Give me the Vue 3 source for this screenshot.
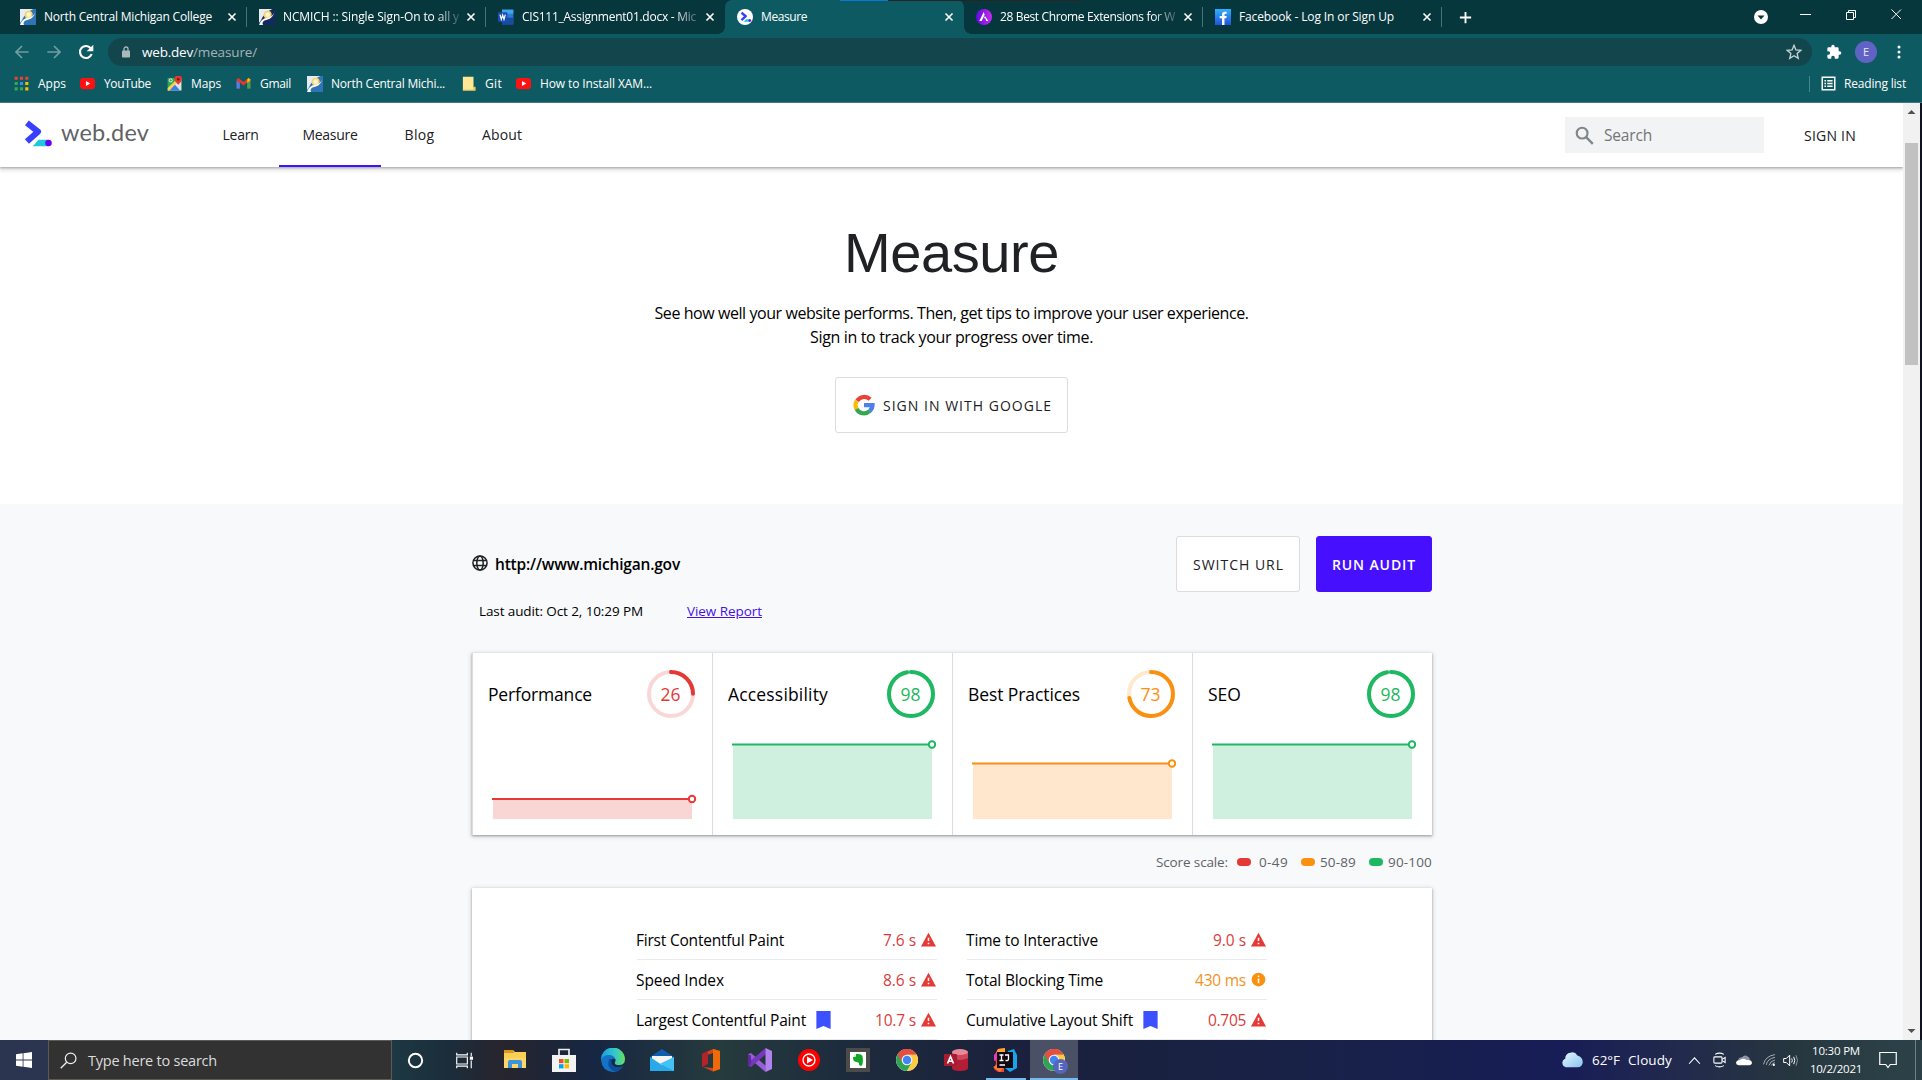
<script setup>
// Tightens or loosens the tracking of a label so that it fills the given width.
const vFit = {
  mounted(el, { value }) {
    const natural = el.getBoundingClientRect().width
    el.style.letterSpacing = (value - natural) / el.textContent.length + 'px'
  },
}

const chrome = `<circle cx="12" cy="12" r="11" fill="#fff"/><path d="M12 12 2.5 6.5A11 11 0 0 1 21.5 6.500H12Z" fill="#e2503f"/><path d="M2.5 6.500A11 11 0 0 0 12 23L16.800 14.700 12 12Z" fill="#2fa455"/><path d="M21.500 6.500A11 11 0 0 1 12 23L16.800 14.700 14 7Z" fill="#fbcb40"/><path d="M2.500 6.500 7.200 14.700 9 8 12 6.500H21.500A11 11 0 0 0 2.500 6.500Z" fill="#e2503f"/><circle cx="12" cy="12" r="5.300" fill="#f4f6fa"/><circle cx="12" cy="12" r="4.200" fill="#3f86f3"/>`
const college = (dark) => `<path d="M0 0H24V24H0Z" fill="${dark}"/><path d="M0 0H20Q8 5 3 17L0 21Z" fill="#e6ecf2"/><circle cx="13" cy="8.500" r="6" fill="#f7d36b"/><circle cx="13" cy="8.500" r="3.500" fill="#fff6cf"/><path d="M0 24Q3 14 12 13T23 4Q21 14 12 16T6 24Z" fill="#fff"/>`
const youtube = `<rect y="3" width="24" height="18" rx="5" fill="#f11"/><path d="M9.500 8 16.500 12 9.500 16Z" fill="#fff"/>`
const webdev = `<path d="M2.500 2.500 12 10 2.500 18.500" fill="none" stroke="#3740ff" stroke-width="5.200" stroke-linejoin="round"/><path d="M7.500 22.500 12.500 17H21V22.500Z" fill="#1fc8db"/><circle cx="21" cy="19.700" r="2.800" fill="#6a00f4"/>`

const icons = {
  nc: college('#2f74b5'),
  ncDark: college('#14295c'),
  word: `<path d="M6 1H23V23H6Z" fill="#2b7cd3"/><path d="M6 1H23V7H6Z" fill="#41a5ee"/><path d="M6 13H23V23H6Z" fill="#1b4aa5"/><rect y="5" width="14" height="14" rx="1" fill="#184fb4"/><path d="M3 8.500 5 15.500 7 9 9 15.500 11 8.500" fill="none" stroke="#fff" stroke-width="1.800"/>`,
  webdevFav: `<circle cx="12" cy="12" r="12" fill="#fff"/><g transform="translate(5 4) scale(.68)">${webdev}</g>`,
  astra: `<defs><linearGradient id="as"><stop stop-color="#5a0be0"/><stop offset="1" stop-color="#c62cf0"/></linearGradient></defs><circle cx="12" cy="12" r="12" fill="url(#as)"/><path d="M11.500 4.500 5 18H8.500L13 8.500ZM13.500 10.500 11.800 14H14L15.500 18H18.500Z" fill="#fff"/>`,
  facebook: `<defs><linearGradient id="fb" x2="0" y2="1"><stop stop-color="#2cb2fa"/><stop offset="1" stop-color="#2450d8"/></linearGradient></defs><path d="M0 0H24V24H0Z" fill="url(#fb)"/><path d="M10.500 24V14H7V10.500H10.500V8Q10.500 4 14.800 4H17.500V7.300H16Q14.200 7.300 14.200 9V10.500H17.500L17 14H14.200V24Z" fill="#fff"/>`,
  close: `<path d="M6 6 18 18M18 6 6 18" stroke="#fff" stroke-width="2.800"/>`,
  plus: `<path d="M12 3V21M3 12H21" stroke="#fff" stroke-width="3"/>`,
  back: `<path d="M22 12H4M12 3 3 12 12 21" fill="none" stroke="#6f9da1" stroke-width="2.600"/>`,
  forward: `<path d="M2 12H20M12 3 21 12 12 21" fill="none" stroke="#6f9da1" stroke-width="2.600"/>`,
  reload: `<path d="M20.500 15A9 9 0 1 1 19.500 7" fill="none" stroke="#fff" stroke-width="3.200"/><path d="M23 1V11H13Z" fill="#fff"/>`,
  lock: `<rect x="4" y="9" width="16" height="14" rx="1.500" fill="#a9b9bc"/><path d="M8 10V6A4 4 0 0 1 16 6V10" fill="none" stroke="#a9b9bc" stroke-width="2.600"/>`,
  star: `<path d="M12 2 14.900 8.900 22.300 9.500 16.700 14.300 18.400 21.600 12 17.700 5.600 21.600 7.300 14.300 1.700 9.500 9.100 8.900Z" fill="none" stroke="#c8d3d4" stroke-width="2"/>`,
  puzzle: `<path d="M20.500 11H19V7a2 2 0 0 0-2-2H13V3.500a2.500 2.500 0 0 0-5 0V5H4A2 2 0 0 0 2 7V10.800H3.500a2.700 2.700 0 0 1 0 5.400H2V20a2 2 0 0 0 2 2H7.800V20.500a2.700 2.700 0 0 1 5.400 0V22H17a2 2 0 0 0 2-2V16H20.500a2.500 2.500 0 0 0 0-5Z" fill="#fff"/>`,
  dots: `<g fill="#fff"><circle cx="12" cy="3.500" r="2.600"/><circle cx="12" cy="12" r="2.600"/><circle cx="12" cy="20.500" r="2.600"/></g>`,
  apps: `<path d="M1 1H6V6H1ZM9.500 1H14.500V6H9.500ZM18 1H23V6H18Z" fill="#ea4335"/><path d="M1 9.500H6V14.500H1ZM1 18H6V23H1Z" fill="#34a853"/><path d="M9.500 9.500H14.500V14.500H9.500Z" fill="#4285f4"/><path d="M18 9.500H23V14.500H18ZM18 18H23V23H18Z" fill="#fbbc04"/><path d="M9.500 18H14.500V23H9.500Z" fill="#34a853"/>`,
  youtube,
  maps: `<path d="M1 3H23V23H1Z" fill="#2fa65a"/><path d="M1 23 23 3V23Z" fill="#dfe3e6"/><path d="M3 23 12 13 21 23Z" fill="#3f7de8"/><path d="M1 19 18 3H23L4 23H1Z" fill="#f7d24a"/><path d="M18 14Q12 8 12 5A5.800 5.800 0 0 1 24 5Q24 8 18 14Z" fill="#e5392e"/><circle cx="18" cy="5" r="2" fill="#7c1710"/><circle cx="6" cy="7" r="2.500" fill="none" stroke="#fff" stroke-width="1.300"/>`,
  gmail: `<path d="M1 5V20H6V10L12 15 18 10V20H23V5L20 3 12 9.500 4 3Z" fill="#e8372c"/><path d="M1 7V20H6V11Z" fill="#4285f4"/><path d="M18 11V20H23V7Z" fill="#34a853"/><path d="M18 11 23 7V5L20 3 18 5Z" fill="#fbbc04"/>`,
  folder: `<path d="M3 1H20V18H23V23H3Z" fill="#ffe795"/><path d="M20 17H23V23H3V21.500H20Z" fill="#e8c65b"/>`,
  reading: `<rect x="2" y="2" width="20" height="20" fill="none" stroke="#fff" stroke-width="2.400"/><path d="M5.500 7.500H8M10 7.500H18.500M5.500 12H8M10 12H18.500M5.500 16.500H8M10 16.500H18.500" stroke="#fff" stroke-width="2.300"/>`,
  webdev,
  search: `<circle cx="9" cy="9" r="6.800" fill="none" stroke="#80868b" stroke-width="2.700"/><path d="M14 14 22.500 22.500" stroke="#80868b" stroke-width="3"/>`,
  google: `<g fill="none" stroke-width="4.600"><path d="M4.500 7.500A9.200 9.200 0 0 1 18.700 5.800" stroke="#ea4335"/><path d="M4 16.500A9.200 9.200 0 0 1 4 7.500" stroke="#fbbc05"/><path d="M18.300 18.600A9.200 9.200 0 0 1 3.900 16.300" stroke="#34a853"/><path d="M12 12.100H21.300Q21.300 16.200 18.200 18.700" stroke="#4c7ff0"/></g>`,
  globe: `<g fill="none" stroke="#202124" stroke-width="2.300"><circle cx="12" cy="12" r="10.600"/><ellipse cx="12" cy="12" rx="4.800" ry="10.600"/><path d="M2 8.300H22M2 15.700H22"/></g>`,
  fail: `<path d="M12 1 24 23H0Z" fill="#e53935"/><path d="M12 9V14.500M12 17V19.500" stroke="#fff" stroke-width="2.400"/>`,
  average: `<circle cx="12" cy="12" r="11" fill="#fa9010"/><path d="M12 5.500V8M12 10.500V18" stroke="#fff" stroke-width="2.400"/>`,
  bookmark: `<path d="M3 0H21V24L12 20 3 24Z" fill="#3d50ff"/>`,
  windows: `<path d="M0 3.400 10 2V11.400H0ZM11.200 1.800 24 0V11.400H11.200ZM0 12.600H10V22L0 20.600ZM11.200 12.600H24V24L11.200 22.200Z" fill="#fff"/>`,
  find: `<circle cx="15" cy="9" r="7.500" fill="none" stroke="#f0f0f0" stroke-width="1.700"/><path d="M9.500 14.500 1 23" stroke="#f0f0f0" stroke-width="1.800"/>`,
  cortana: `<circle cx="12" cy="12" r="9.400" fill="none" stroke="#fff" stroke-width="2.800"/>`,
  taskview: `<g fill="none" stroke="#fff" stroke-width="1.600"><path d="M1 7H16V17H1ZM1 1V4H16V1M1 23V20H16V23M21.500 1V6M21.500 12V23"/></g><path d="M19.500 6.500H24V11H19.500Z" fill="#fff"/>`,
  explorer: `<path d="M1 2H10L12 4H23V20H1Z" fill="#f9cf55"/><path d="M1 2H10L11 5H1Z" fill="#d79a1c"/><path d="M1 10H23V20H1Z" fill="#fbd669"/><path d="M5 20V14Q5 12 7 12H17Q19 12 19 14V20H15V16H9V20Z" fill="#3d93dc"/>`,
  store: `<path d="M7 8V1.500H17V8" fill="none" stroke="#eee" stroke-width="1.700"/><path d="M0 7H24V24H0Z" fill="#f3f3f3"/><path d="M7 11H11.500V15.200H7Z" fill="#f25022"/><path d="M12.500 11H17V15.200H12.500Z" fill="#7fba00"/><path d="M7 16.200H11.500V20.400H7Z" fill="#00a4ef"/><path d="M12.500 16.200H17V20.400H12.500Z" fill="#ffb900"/>`,
  edge: `<defs><linearGradient id="e1"><stop stop-color="#1d9be6"/><stop offset=".6" stop-color="#35c9c9"/><stop offset="1" stop-color="#66e05c"/></linearGradient></defs><path d="M0 12A12 12 0 0 1 24 11Q24 17 18 17 13 17 14 14 16 11 12 9 6 8 0 12Z" fill="url(#e1)"/><path d="M0 12Q2 7 8 7 13 7 14 11 9 10 8.500 15 8.500 19 14 21 18 22 22 18 18 24 12 24 1 23 0 12Z" fill="#1473c8"/><path d="M8 11Q5 21 14 23.700 19 23.500 22 18 17 20.500 12.500 18 9 15 11 11Z" fill="#0c4f9d"/>`,
  mail: `<path d="M0 9 12 1 24 9V12H0Z" fill="#0f5fb0"/><path d="M2 8H22V18H2Z" fill="#f5f5f5"/><path d="M0 9 12 17 24 9V23H0Z" fill="#2aa9ea"/><path d="M24 9V23L10 15.700Z" fill="#43c3f5"/>`,
  office: `<path d="M3 6 14 1 21 3V21L14 23.500 4 19 14 20V5L8 7V16L3 19Z" fill="#d9411a"/><path d="M14 1 21 3V21L14 23.500Z" fill="#f06a08"/><path d="M3 6 9 3V16L3 19Z" fill="#b4232a"/>`,
  vs: `<path d="M0 6.500 3 5 18 18 17.500 24 0 9Z" fill="#9a5cd8"/><path d="M0 17.500 3 19 18 6 17.500 0 0 15Z" fill="#7438b8"/><path d="M0 6.500 3 7.500V16.500L0 17.500Z" fill="#5d2b9c"/><path d="M17.500 0 24 3V21L17.500 24Z" fill="#b182ee"/>`,
  ytmusic: `<circle cx="12" cy="12" r="11" fill="#f00"/><circle cx="12" cy="12" r="6" fill="none" stroke="#fff" stroke-width="1.300"/><path d="M10 8.500 16 12 10 15.500Z" fill="#fff"/>`,
  evernote: `<path d="M0 0H24V24H0Z" fill="#4b4b4b"/><path d="M4 4H20V20H4Z" fill="#fff"/><path d="M7 9.500 10 6Q15.500 5.500 16.500 8 17.500 14 16 17.500 12.500 18.500 13 15L11 14Q7 14 7 9.500Z" fill="#12a528"/><path d="M7 8.500H9.500V6" fill="none" stroke="#fff" stroke-width=".8"/>`,
  chrome,
  access: `<path d="M8 4V20Q8 23 16 23T24 20V4Z" fill="#b31d35"/><path d="M8 4V10Q16 14 24 10V4Z" fill="#ce4659"/><ellipse cx="16" cy="4" rx="8" ry="3" fill="#e8899a"/><rect y="6" width="13" height="12" rx="1" fill="#a81c2f"/><path d="M3.500 15.500 6.500 8.500 9.500 15.500M4.500 13.300H8.500" fill="none" stroke="#fff" stroke-width="1.600"/>`,
  idea: `<path d="M1 8 5 1 12 0 11 24H5L1 21 3 15Z" fill="#f0443c"/><path d="M5 1 12 0V5H3Z" fill="#fba62d"/><path d="M1 7 4 4V11L1 13Z" fill="#e73cba"/><path d="M15 3 21 1 24 7V20L17 24 12 20Z" fill="#17a3ee"/><path d="M0 19 4 17 10 20 7 24Z" fill="#fc7b2b"/><path d="M4 4H20V20H4Z" fill="#100a10"/><path d="M6.500 7H10.500M8.500 7V12.500M6.500 12.500H10.500M12 7H15.500V11Q15.500 13 12.500 12.500" fill="none" stroke="#fff" stroke-width="1.300"/><path d="M6.500 17H12" stroke="#fff" stroke-width="1.500"/>`,
  cloud: `<defs><linearGradient id="cl" x2="1" y2="1"><stop stop-color="#e7f6ff"/><stop offset="1" stop-color="#86c5ee"/></linearGradient></defs><path d="M5 20A5 5 0 0 1 4.500 10.500 6 6 0 0 1 10 4Q15 2 18 7 24 9 24 14.500 23.500 20 18 20Z" fill="url(#cl)"/>`,
  chevron: `<path d="M2 18 12 7 22 18" fill="none" stroke="#fff" stroke-width="2"/>`,
  meet: `<g fill="none" stroke="#fff" stroke-width="1.700"><rect x="3" y="7" width="13" height="10" rx="1.500"/><path d="M16 11 21 8V16L16 13M5 3Q12-1 19 3M5 21Q12 25 19 21"/></g>`,
  onedrive: `<path d="M3 13Q4 8 9 8 13 3 18 7 22 9 20 13Z" fill="#8e95a3"/><path d="M4 20Q0 19 0 16 1 12 6 12 11 8 16 12 24 11 24 17 23 20 20 20Z" fill="#fff"/>`,
  wifi: `<g fill="none" stroke="#b8c0c8" stroke-width="1.600"><path d="M1 20Q4 5 22 2M6 21Q8 10 22 7M11 22Q13 14 22 12M15.500 22Q17 18 22 17"/></g><circle cx="20" cy="21" r="2" fill="#fff"/>`,
  speaker: `<g fill="none" stroke="#fff" stroke-width="1.500"><path d="M1 9H5L10 4V20L5 15H1ZM13 9Q15 12 13 15M16 6.500Q19.500 12 16 17.500"/><path d="M19.500 4Q24 12 19.500 20" stroke="#88929d"/></g>`,
  notice: `<path d="M1 2H23V18H15L12 22 9 18H1Z" fill="none" stroke="#fff" stroke-width="1.600"/>`,
}

const tabs = [
  { icon: 'nc', label: 'North Central Michigan College', w: 168 },
  { icon: 'ncDark', label: 'NCMICH :: Single Sign-On to all y', w: 176, fade: true },
  { icon: 'word', label: 'CIS111_Assignment01.docx - Mic', w: 174, fade: true, flush: true },
  { icon: 'webdevFav', label: 'Measure', w: 46, active: true },
  { icon: 'astra', label: '28 Best Chrome Extensions for W', w: 175, fade: true },
  { icon: 'facebook', label: 'Facebook - Log In or Sign Up', w: 155 },
]

const bookmarks = [
  { icon: 'apps', label: 'Apps', w: 28, slot: 66 },
  { icon: 'youtube', label: 'YouTube', w: 47, slot: 87 },
  { icon: 'maps', label: 'Maps', w: 30, slot: 69 },
  { icon: 'gmail', label: 'Gmail', w: 31, slot: 71 },
  { icon: 'nc', label: 'North Central Michi...', w: 114, slot: 154 },
  { icon: 'folder', label: 'Git', w: 17, slot: 55 },
  { icon: 'youtube', label: 'How to Install XAM...', w: 112, slot: 160 },
]

const nav = [
  { label: 'Learn', w: 36, slot: 77 },
  { label: 'Measure', w: 55, slot: 102, active: true },
  { label: 'Blog', w: 30, slot: 77 },
  { label: 'About', w: 40, slot: 88 },
]

const red = '#e53935'
const orange = '#fa9010'
const green = '#1eb863'
const ring = 2 * Math.PI * 22
const scores = [
  { label: 'Performance', w: 104, score: 26, color: red, y: 146 },
  { label: 'Accessibility', w: 100, score: 98, color: green, y: 91.5 },
  { label: 'Best Practices', w: 112, score: 73, color: orange, y: 110.5 },
  { label: 'SEO', w: 33, score: 98, color: green, y: 91.5 },
]

const legend = [
  { label: '0-49', w: 29, color: red, gap: 8 },
  { label: '50-89', w: 36, color: orange, gap: 5 },
  { label: '90-100', w: 44, color: green, gap: 5 },
]

const metrics = [
  [
    { label: 'First Contentful Paint', w: 148, value: '7.6 s', vw: 33 },
    { label: 'Speed Index', w: 88, value: '8.6 s', vw: 33 },
    { label: 'Largest Contentful Paint', w: 170, value: '10.7 s', vw: 41, vital: true },
  ],
  [
    { label: 'Time to Interactive', w: 132, value: '9.0 s', vw: 33 },
    { label: 'Total Blocking Time', w: 137, value: '430 ms', vw: 51, average: true },
    { label: 'Cumulative Layout Shift', w: 167, value: '0.705', vw: 38, vital: true },
  ],
]

const apps = ['explorer', 'store', 'edge', 'mail', 'office', 'vs', 'ytmusic', 'evernote', 'chrome', 'access', 'idea']
</script>

<template>
  <div class="screen">
    <div class="browser">
      <div class="tabstrip">
        <div class="snap"><i></i><b></b></div>
        <div v-for="t in tabs" :key="t.label" class="tab" :class="{ active: t.active, flush: t.flush }">
          <svg class="fav" viewBox="0 0 24 24" v-html="icons[t.icon]"></svg>
          <div class="tab-title" :class="{ fade: t.fade }"><span v-fit="t.w">{{ t.label }}</span></div>
          <svg class="tab-close" viewBox="0 0 24 24" v-html="icons.close"></svg>
        </div>
        <svg class="plus" viewBox="0 0 24 24" v-html="icons.plus"></svg>
        <div class="winctl">
          <svg width="160" height="34" viewBox="0 0 160 34" fill="none" stroke="#fff">
            <circle cx="21" cy="17" r="7" fill="#fff" stroke="none" />
            <path d="M17.500 15.500H24.500L21 19.500Z" fill="#06373d" stroke="none" />
            <path d="M60 14.500H71M106.500 12.500H113.500V19.500H106.500ZM108.500 12V10.500H115.500V17.500H114M151.500 9.500 161 19M161 9.500 151.500 19" />
          </svg>
        </div>
      </div>

      <div class="toolbar">
        <svg class="tool" viewBox="0 0 24 24" v-html="icons.back"></svg>
        <svg class="tool" viewBox="0 0 24 24" v-html="icons.forward"></svg>
        <svg class="tool" viewBox="0 0 24 24" v-html="icons.reload"></svg>
        <div class="omnibox">
          <svg class="lock" viewBox="0 0 24 24" v-html="icons.lock"></svg>
          <span v-fit="51">web.dev</span><span v-fit="64" class="path">/measure/</span>
          <svg class="star" viewBox="0 0 24 24" v-html="icons.star"></svg>
        </div>
        <svg class="puzzle" viewBox="0 0 24 24" v-html="icons.puzzle"></svg>
        <div class="avatar">E</div>
        <svg class="dots" viewBox="0 0 24 24" v-html="icons.dots"></svg>
      </div>

      <div class="bookmarks">
        <div v-for="b in bookmarks" :key="b.label" class="bookmark" :style="{ width: b.slot + 'px' }">
          <svg :class="{ tall: b.icon === 'nc' }" viewBox="0 0 24 24" v-html="icons[b.icon]"></svg>
          <span v-fit="b.w">{{ b.label }}</span>
        </div>
        <div class="reading">
          <svg viewBox="0 0 24 24" v-html="icons.reading"></svg>
          <span v-fit="62">Reading list</span>
        </div>
      </div>

      <div class="viewport">
        <div class="page">
          <header class="site-header">
            <svg class="logo" viewBox="0 0 24 24" preserveAspectRatio="none" v-html="icons.webdev"></svg>
            <div class="brand"><span v-fit="88">web.dev</span></div>
            <nav>
              <a v-for="n in nav" :key="n.label" :class="{ current: n.active }" :style="{ width: n.slot + 'px' }">
                <span v-fit="n.w">{{ n.label }}</span>
              </a>
            </nav>
            <div class="search">
              <svg viewBox="0 0 24 24" v-html="icons.search"></svg>
              <span v-fit="48">Search</span>
            </div>
            <a class="signin"><span v-fit="52">SIGN IN</span></a>
          </header>

          <section class="hero">
            <h1><span v-fit="215">Measure</span></h1>
            <p><span v-fit="594">See how well your website performs. Then, get tips to improve your user experience.</span></p>
            <p><span v-fit="283">Sign in to track your progress over time.</span></p>
            <button class="google">
              <svg viewBox="0 0 24 24" v-html="icons.google"></svg>
              <span v-fit="169">SIGN IN WITH GOOGLE</span>
            </button>
          </section>

          <section class="report">
            <div class="url-row">
              <svg class="globe" viewBox="0 0 24 24" v-html="icons.globe"></svg>
              <div class="url"><span v-fit="185">http://www.michigan.gov</span></div>
              <button class="switch"><span v-fit="91">SWITCH URL</span></button>
              <button class="run"><span v-fit="84">RUN AUDIT</span></button>
            </div>
            <div class="audit-row">
              <div class="audited"><span v-fit="164">Last audit: Oct 2, 10:29 PM</span></div>
              <a><span v-fit="75">View Report</span></a>
            </div>

            <div class="scores">
              <div v-for="s in scores" :key="s.label" class="score">
                <div class="score-head">
                  <span v-fit="s.w">{{ s.label }}</span>
                  <svg width="48" height="48" viewBox="0 0 48 48" fill="none" stroke-width="4" :stroke="s.color">
                    <circle cx="24" cy="24" r="22" opacity=".2" />
                    <circle cx="24" cy="24" r="22" stroke-linecap="round" transform="rotate(-90 24 24)"
                      :stroke-dasharray="`${(ring * s.score) / 100 - 2} ${ring}`" />
                    <text x="23.500" y="30.500" text-anchor="middle" stroke="none" :fill="s.color" textLength="20">{{ s.score }}</text>
                  </svg>
                </div>
                <svg class="spark" width="208" height="84" viewBox="16 83 208 84">
                  <rect x="20" :y="s.y" width="199" :height="166 - s.y" :fill="s.color" opacity=".21" />
                  <path :d="`M19 ${s.y}H219`" :stroke="s.color" stroke-width="2" />
                  <circle cx="219" :cy="s.y" r="3.200" fill="#fff" :stroke="s.color" stroke-width="2" />
                </svg>
              </div>
            </div>

            <div class="legend">
              <span v-fit="72">Score scale:</span>
              <div v-for="l in legend" :key="l.label" class="key">
                <i :style="{ background: l.color, marginRight: l.gap + 'px' }"></i><span v-fit="l.w">{{ l.label }}</span>
              </div>
            </div>

            <div class="metrics">
              <div v-for="(col, i) in metrics" :key="i" class="metric-col">
                <div v-for="m in col" :key="m.label" class="metric" :class="{ average: m.average }">
                  <span v-fit="m.w" class="name">{{ m.label }}</span>
                  <svg v-if="m.vital" class="vital" viewBox="0 0 24 24" preserveAspectRatio="none" v-html="icons.bookmark"></svg>
                  <span v-fit="m.vw" class="value">{{ m.value }}</span>
                  <svg class="grade" viewBox="0 0 24 24" v-html="m.average ? icons.average : icons.fail"></svg>
                </div>
              </div>
            </div>
          </section>
        </div>
        <div class="scrollbar">
          <svg width="17" height="40" viewBox="0 0 17 40"><path d="M4.500 11 8.500 7 12.500 11Z" fill="#505050" /></svg>
          <div class="thumb"></div>
          <svg width="17" height="17" viewBox="0 0 17 17"><path d="M4.500 6 8.500 10 12.500 6Z" fill="#505050" /></svg>
        </div>
        <div class="edge-strip"></div>
      </div>
    </div>

    <div class="taskbar">
      <div class="start"><svg viewBox="0 0 24 24" v-html="icons.windows"></svg></div>
      <div class="find">
        <svg viewBox="0 0 24 24" v-html="icons.find"></svg>
        <span v-fit="129">Type here to search</span>
      </div>
      <div class="sys"><svg viewBox="0 0 24 24" v-html="icons.cortana"></svg></div>
      <div class="sys"><svg viewBox="0 0 24 24" v-html="icons.taskview"></svg></div>
      <div class="apps">
        <div v-for="a in apps" :key="a" class="app" :class="{ open: a === 'idea' }">
          <svg viewBox="0 0 24 24" v-html="icons[a]"></svg>
        </div>
        <div class="app focus">
          <svg viewBox="0 0 24 24" v-html="icons.chrome"></svg>
          <b>E</b>
        </div>
      </div>
      <div class="tray">
        <svg class="weather" viewBox="0 2 24 20" v-html="icons.cloud"></svg>
        <span v-fit="28" class="temp">62°F</span>
        <span v-fit="44" class="sky">Cloudy</span>
        <svg class="t-chevron" viewBox="0 0 24 24" v-html="icons.chevron"></svg>
        <svg class="t-meet" viewBox="0 0 24 24" v-html="icons.meet"></svg>
        <svg class="t-drive" viewBox="0 0 24 24" v-html="icons.onedrive"></svg>
        <svg class="t-wifi" viewBox="0 0 24 24" v-html="icons.wifi"></svg>
        <svg class="t-sound" viewBox="0 0 24 24" v-html="icons.speaker"></svg>
        <div class="clock"><span v-fit="48">10:30 PM</span><span v-fit="52">10/2/2021</span></div>
        <svg class="t-notice" viewBox="0 0 24 24" v-html="icons.notice"></svg>
        <div class="peek"></div>
      </div>
    </div>
  </div>
</template>

<style>
body { margin: 0; overflow: hidden; }
</style>

<style scoped>
* { box-sizing: border-box; }
.screen {
  width: 1922px; height: 1080px; display: flex; flex-direction: column; overflow: hidden;
  font-family: "Open Sans", "Noto Sans", sans-serif; font-stretch: 94%; color: #000; background: #fff;
}
svg { flex: none; display: block; }
span { white-space: nowrap; flex: none; display: inline-block; }
.browser { height: 1040px; display: flex; flex-direction: column; }

.tabstrip {
  height: 34px; background: #06373d; display: flex; align-items: center; padding-left: 8px;
  color: #fff; font-size: 12px; position: relative;
}
.snap { position: absolute; left: 840px; top: 0; width: 241px; height: 1px; display: flex; z-index: 2; }
.snap i { width: 48px; background: #0a78d7; }
.snap b { flex: 1; background: #252525; }
.tab { width: 239px; height: 34px; display: flex; align-items: center; padding-left: 12px; position: relative; flex: none; }
.tab::after { content: ""; position: absolute; right: 0; top: 7px; width: 1px; height: 20px; background: #497277; }
.tab.flush::after, .tab.active::after { display: none; }
.tab.active { background: #0e5a62; border-radius: 7px 7px 0 0; }
.tab.active::before {
  content: ""; position: absolute; left: -7px; right: -7px; bottom: 0; height: 7px;
  background:
    radial-gradient(circle at 0 0, transparent 6.500px, #0e5a62 7px) left / 7px 7px no-repeat,
    radial-gradient(circle at 100% 0, transparent 6.500px, #0e5a62 7px) right / 7px 7px no-repeat;
}
.fav { width: 16px; height: 16px; }
.tab-title { width: 178px; margin: 0 0 2px 8px; }
.tab-title.fade { -webkit-mask: linear-gradient(90deg, #000 152px, rgba(0, 0, 0, .2) 176px); mask: linear-gradient(90deg, #000 152px, rgba(0, 0, 0, .2) 176px); }
.tab-close { width: 14px; height: 14px; margin-left: 3px; }
.plus { width: 15px; height: 15px; margin-left: 16px; }
.winctl { margin-left: auto; width: 182px; }
.winctl svg { overflow: visible; }

.toolbar { height: 36px; background: #0e5a62; display: flex; align-items: center; padding: 0 0 0 14px; font-size: 13.500px; color: #fff; }
.tool { width: 16px; height: 16px; margin-right: 16px; }
.tool:nth-child(3) { margin-right: 14px; }
.omnibox { width: 1704px; height: 28px; border-radius: 14px; background: #12464c; display: flex; align-items: center; padding-left: 12px; flex: none; }
.lock { width: 12px; height: 12px; margin-right: 10px; }
.path { color: #a0b5b8; }
.star { width: 16px; height: 16px; margin: 0 10px 0 auto; }
.puzzle { width: 16px; height: 16px; margin-left: 14px; }
.avatar { width: 22px; height: 22px; border-radius: 50%; background: #6163c4; margin-left: 13px; font-size: 11px; line-height: 22px; text-align: center; color: #e7e7fa; }
.dots { width: 14px; height: 14px; margin-left: 15px; }

.bookmarks { height: 33px; background: #0e5a62; border-bottom: 1px solid #3e7b81; display: flex; align-items: center; padding: 0 16px 5px 14px; font-size: 12px; color: #fff; }
.bookmark { display: flex; align-items: center; flex: none; }
.bookmark svg { width: 15px; height: 15px; margin-right: 9px; }
.bookmark svg.tall { width: 16px; height: 16px; margin-right: 8px; }
.bookmark span, .reading span { margin-bottom: 1px; }
.reading { margin-left: auto; height: 16px; border-left: 1px solid #44888e; padding-left: 11px; display: flex; align-items: center; }
.reading svg { width: 15px; height: 15px; margin-right: 8px; }

.viewport { height: 937px; display: flex; }
.page { width: 1903px; height: 937px; overflow: hidden; }
.scrollbar { width: 17px; background: #f1f1f1; display: flex; flex-direction: column; }
.thumb { width: 13px; height: 222px; margin: 0 0 auto 2px; background: #c1c1c1; }
.edge-strip { width: 2px; background: #10131d; }

.site-header {
  height: 64px; display: flex; align-items: center; padding-left: 24px; background: #fff; position: relative;
  box-shadow: 0 1px 2px rgba(60, 64, 67, .35), 0 2px 4px 1px rgba(60, 64, 67, .18); color: #202124;
}
.logo { width: 28px; height: 28px; margin-bottom: 3px; }
.brand { margin: 0 0 7px 9px; width: 141px; font: 23.500px Lato, "Open Sans", sans-serif; color: #5f6368; }
nav { display: flex; height: 64px; font-size: 14px; font-weight: 500; }
nav a { display: flex; justify-content: center; align-items: center; padding-bottom: 1px; }
nav a:first-child { width: 78px; }
nav a.current { border-bottom: 2px solid #4310ff; padding: 1px 0 0; }
.search { width: 199px; height: 36px; margin-left: auto; background: #f1f3f4; display: flex; align-items: center; font-size: 15.500px; color: #757575; padding-left: 10px; }
.search svg { width: 19px; height: 19px; margin-right: 10px; }
.signin { margin: 1px 47px 0 40px; font-size: 14px; }

.hero { height: 337px; display: flex; flex-direction: column; align-items: center; padding-top: 54px; }
h1 { margin: 0 0 16px; font: 400 56px/64px "Liberation Sans", Arial, sans-serif; color: #202124; }
.hero p { margin: 0; font-size: 16px; line-height: 24px; }
button { font: inherit; padding: 0; display: flex; align-items: center; border-radius: 3px; background: #fff; border: 1px solid #dadce0; height: 56px; color: #202124; font-weight: 500; font-size: 14px; }
.google { width: 233px; margin-top: 28px; padding-left: 17px; }
.google svg { width: 22px; height: 22px; margin-right: 8px; }

.report { height: 536px; background: #f8f9fb; padding: 32px 471px 0 472px; }
.url-row { height: 56px; display: flex; align-items: center; }
.globe { width: 16px; height: 16px; margin: 0 7px 2px 0; }
.url { font-size: 15.500px; font-weight: 600; margin-right: auto; }
.switch { width: 124px; margin-right: 16px; padding-left: 16px; }
.run { width: 116px; padding-left: 15px; background: #4610ff; border-color: #4610ff; color: #fff; font-weight: 600; }
.audit-row { height: 61px; padding: 9px 0 0 7px; display: flex; font-size: 13.500px; line-height: 20px; }
.audited { width: 208px; }
.audit-row a { color: #4310e8; }
.audit-row a span { text-decoration: underline; }

.scores { height: 182px; display: flex; background: #fff; box-shadow: 0 1px 2px rgba(60, 64, 67, .4), 0 1px 4px 1px rgba(60, 64, 67, .18); }
.score { width: 240px; border-left: 1px solid #dadce0; padding: 17px 17px 0 15px; }
.score-head { height: 48px; display: flex; justify-content: space-between; align-items: center; font-size: 17.500px; font-weight: 500; }
.score-head text { font-size: 17.500px; font-weight: 500; }
.spark { margin: 18px 0 0 1px; }
.legend { height: 53px; display: flex; justify-content: flex-end; align-items: center; font-size: 13.500px; color: #5f6368; }
.key { display: flex; align-items: center; margin-left: 9px; }
.key + .key { margin-left: 13px; }
.key i { width: 14px; height: 8px; border-radius: 4px; }

.metrics { height: 180px; background: #fff; display: flex; gap: 30px; padding: 32px 0 0 165px; box-shadow: 0 1px 2px rgba(60, 64, 67, .4), 0 1px 4px 1px rgba(60, 64, 67, .18); }
.metric { width: 300px; height: 40px; border-bottom: 1px solid #e8eaed; display: flex; align-items: center; font-size: 15.500px; }
.name { margin-left: -1px; }
.vital { width: 19px; height: 18px; margin-left: 8px; }
.value { margin-left: auto; color: #d93d3d; }
.average .value { color: #f29325; }
.grade { width: 15px; height: 15px; margin: 0 1px 0 5px; }

.taskbar {
  height: 40px; display: flex; align-items: center; color: #fff; flex: none;
  background: linear-gradient(90deg, #2b3550 0, #2b3550 48px, #1d3943 392px, #1b2c3b 450px, #27252d 500px, #172642 590px, #263b3d 720px, #1d2c3d 840px, #1b213b 1000px, #182247 1300px, #171d56 1560px, #222a4d 1680px, #26363f 1790px, #2c4147 1900px, #2c4147);
}
.start { width: 48px; padding-left: 16px; }
.start svg { width: 16px; height: 16px; }
.find { width: 344px; height: 40px; background: #323232; border: 1px solid #5e5b57; display: flex; align-items: center; padding-left: 11px; font-size: 14.500px; color: #dcdcdc; }
.find svg { width: 17px; height: 17px; margin-right: 11px; }
.sys { width: 48px; padding-left: 16px; }
.sys svg { width: 17px; height: 17px; }
.sys:nth-child(3) svg { margin-left: -1px; }
.apps { display: flex; margin-left: 2px; }
.app { width: 49.100px; height: 40px; display: flex; justify-content: center; align-items: center; position: relative; }
.app svg { width: 24px; height: 24px; }
.app.open::after { content: ""; position: absolute; left: 5px; right: 4px; bottom: 0; height: 2px; background: #76b9ed; }
.app.focus { width: 48px; background: #4a5066; border-bottom: 2px solid #76b9ed; padding-top: 2px; }
.app.focus b { position: absolute; left: 23px; top: 19px; width: 15px; height: 15px; border-radius: 50%; background: #5565be; font-size: 9px; line-height: 15px; text-align: center; font-weight: 500; }
.tray { margin-left: auto; display: flex; align-items: center; height: 40px; font-size: 13.500px; }
.weather { width: 22px; height: 18px; margin-right: 9px; }
.temp { margin-right: 8px; }
.sky { margin-right: 16px; }
.t-chevron { width: 13px; height: 13px; margin-right: 16px; }
.t-meet { width: 15px; height: 16px; margin-right: 9px; }
.t-drive { width: 16px; height: 16px; margin-right: 11px; }
.t-wifi { width: 13px; height: 14px; margin-right: 8px; }
.t-sound { width: 16px; height: 17px; margin-right: 10px; }
.clock { width: 54px; display: flex; flex-direction: column; align-items: center; font-size: 11.500px; line-height: 18px; margin: 0 15px 1px 0; }
.t-notice { width: 18px; height: 18px; margin-right: 18px; }
.peek { width: 7px; height: 40px; border-left: 1px solid #728086; }
.clock, .t-sound { position: relative; left: -1px; }
.weather, .temp, .sky, .t-chevron { position: relative; left: 5px; }
</style>
